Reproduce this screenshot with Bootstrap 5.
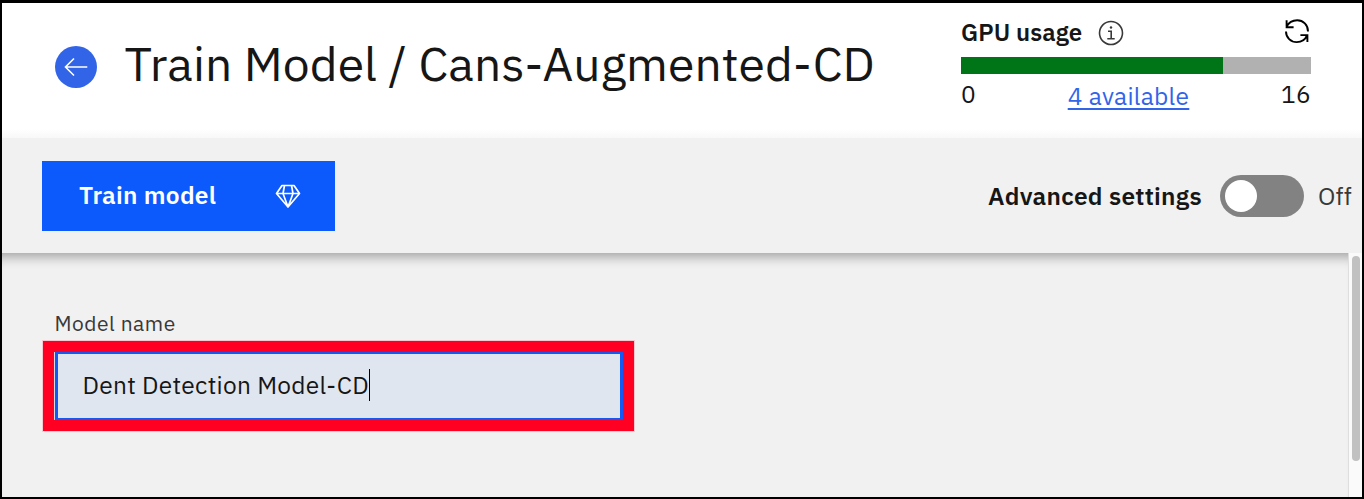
<!DOCTYPE html>
<html lang="en">
<head>
<meta charset="utf-8">
<meta name="viewport" content="width=device-width, initial-scale=1">
<title>Train Model</title>
<link href="https://cdn.jsdelivr.net/npm/bootstrap@5.3.0/dist/css/bootstrap.min.css" rel="stylesheet">
<style>
body{font-family:"IBM Plex Sans","Open Sans",sans-serif;font-size:24.5px;letter-spacing:.28px;line-height:32px;color:#161616;background:#f1f1f1;overflow:hidden}
.app{height:499px;border:2px solid #000;border-top-width:3px}
.app-header{height:135px;background:linear-gradient(#fff 126px,#f8f8f8 135px)}
.back-btn{width:42px;height:42px;margin:43px 0 0 53px;background:#3264e8}
.page-title{font-size:48px;letter-spacing:.06px;line-height:60px;font-weight:400;margin:30px 0 0 27.5px;white-space:nowrap}
.gpu{width:350px;margin-right:51px;padding-top:13px}
.gpu-head{height:32px}
.gpu-head strong{font-size:24px;letter-spacing:.08px}
.info{margin:2px 0 0 16px}
.gpu-bar{height:17px;margin-top:9px;border-radius:0;background:#b1b1b1}
.gpu-bar .progress-bar{background:#007518}
.gpu-scale{margin-top:4px;height:32px}
.gpu-scale a{color:#3264e8;text-decoration-thickness:2px;text-underline-offset:3px;position:relative;top:2px}
.toolbar{height:115px;background:#f1f1f1;position:relative;z-index:1}
.train-btn{width:293px;height:70px;margin-left:40px;padding:0 34px 0 37px;border:0;border-radius:0;background:#0c5afb;font-size:24.5px;letter-spacing:.28px}
.toggle{width:84px;height:42px;padding:5px;background:#828282;margin:0 14px 0 18px}
.knob{width:32px;height:32px;background:#fff}
.off{color:#393939;margin-right:10px}
.content{box-shadow:inset 0 14px 12px -10px rgba(0,0,0,.33)}
.field-label{font-size:21px;letter-spacing:.5px;line-height:28px;color:#393939;margin:56px 0 0 52.5px}
.callout-box{width:591px;height:90px;margin:4px 0 0 41px;border:11px solid #ff0022;background:#d5d9e2;padding-left:1px;box-shadow:0 0 0 1px rgba(255,0,34,.16)}
.name-field{height:68px;border:solid #1459f3;border-width:2px 3px;background:#e0e6f0;padding:0 0 2px 24.5px}
.caret{width:1px;height:32px;background:#000}
.scroll-track{width:14px;background:#fafafa;border-left:1px solid #dedede;padding:3px 2px 0 3px}
.thumb{width:8px;height:205px;background:#c1c1c1}
</style>
</head>
<body>
<div class="app d-flex flex-column">
  <header class="app-header d-flex align-items-start flex-shrink-0">
    <a href="#" class="back-btn rounded-circle flex-shrink-0 d-flex align-items-center justify-content-center" aria-label="Back">
      <svg width="42" height="42" fill="none" stroke="#fff" stroke-width="1.6"><path d="M32.300 21H10.500M19 12.500 10.500 21 19 29.500"/></svg>
    </a>
    <h1 class="page-title mb-0">Train Model / Cans-Augmented-CD</h1>
    <section class="gpu ms-auto">
      <div class="gpu-head d-flex align-items-center">
        <strong class="fw-semibold">GPU usage</strong>
        <svg class="info" width="26" height="26" fill="none" stroke="#393939" stroke-width="1.6"><circle cx="13" cy="13" r="11.5"/><path d="M10 11.2h3.2v7.3M9.300 18.800h7.400"/><circle cx="13" cy="7.5" r="1.2" fill="#393939" stroke="none"/></svg>
        <svg class="ms-auto" width="28" height="28" fill="none" stroke="#000" stroke-width="1.9"><path d="M3.400 8.800C5.700 4.400 9.800 2.200 14.200 2.200c6 0 10.800 4.600 10.800 11.200M3.600 2.300v7h7M3 13.400C3 19.600 7.800 24.100 13.800 24.100c4.400 0 8.500-2.500 10.200-6.700M17.400 17.100h7v7"/></svg>
      </div>
      <div class="progress gpu-bar"><div class="progress-bar" style="width:74.900%"></div></div>
      <div class="gpu-scale d-flex justify-content-between"><span>0</span><a href="#">4 available</a><span>16</span></div>
    </section>
  </header>
  <div class="toolbar d-flex align-items-center flex-shrink-0">
    <button class="btn btn-primary train-btn d-flex align-items-center justify-content-between fw-semibold">Train model
      <svg width="26" height="26" fill="none" stroke="#fff" stroke-width="1.7" stroke-linejoin="round"><path d="M7 2.500h12l5.500 8L13 24 1.500 10.500ZM1.500 10.500h23M9.500 2.500l-1.500 8L13 24l5-13.500-1.500-8"/></svg>
    </button>
    <label class="ms-auto fw-semibold">Advanced settings</label>
    <div class="toggle rounded-pill"><div class="knob rounded-circle"></div></div>
    <span class="off">Off</span>
  </div>
  <div class="d-flex flex-grow-1">
    <main class="content flex-grow-1 d-flex flex-column">
      <div class="field-label">Model name</div>
      <div class="callout-box"><div class="name-field d-flex align-items-center">Dent Detection Model-CD<span class="caret"></span></div></div>
    </main>
    <div class="scroll-track"><div class="thumb rounded-pill"></div></div>
  </div>
</div>
<script src="https://cdn.jsdelivr.net/npm/bootstrap@5.3.0/dist/js/bootstrap.bundle.min.js"></script>
</body>
</html>
